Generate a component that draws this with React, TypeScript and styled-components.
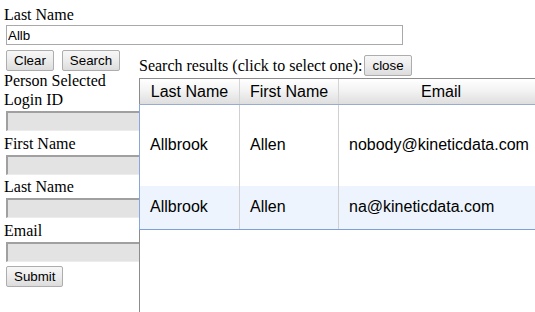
import styled, { createGlobalStyle } from 'styled-components'

const GlobalStyle = createGlobalStyle`
  html, body {
    margin: 0;
    padding: 0;
    background: #fff;
    overflow: hidden;
  }
  body {
    font-family: "Liberation Serif", "Times New Roman", serif;
    font-size: 16px;
    color: #000;
  }
`

const Page = styled.div`
  position: relative;
  height: 312px;
  padding: 5px 0 0 4px;
  box-sizing: border-box;
  overflow: hidden;
`

const Label = styled.div`
  line-height: 19px;
  white-space: nowrap;
`

const TextInput = styled.input`
  display: block;
  box-sizing: border-box;
  width: 397px;
  height: 20px;
  margin: 1px 0 0 2px;
  padding: 0 1px;
  border: 1px solid #a9a9a9;
  font-family: Arial, "Liberation Sans", sans-serif;
  font-size: 13.33px;
  color: #000;
  outline: none;
`

const Button = styled.button`
  height: 21px;
  padding: 0 7px;
  border: 1px solid #adadad;
  border-radius: 2px;
  background: linear-gradient(to bottom, #f7f7f7 0%, #ececec 50%, #dcdcdc 100%);
  font-family: Arial, "Liberation Sans", sans-serif;
  font-size: 13.33px;
  color: #000;
  line-height: 19px;
  cursor: pointer;
`

const ButtonRow = styled.div`
  display: flex;
  gap: 8px;
  margin: 5px 0 0 2px;
`

const Field = styled.div`
  display: flex;
  flex-direction: column;
`

const LockedInput = styled.input`
  display: block;
  box-sizing: border-box;
  width: 200px;
  height: 20px;
  margin: 2px 0 2.5px 2px;
  border-top: 2px solid #a0a0a0;
  border-left: 2px solid #a0a0a0;
  border-right: 1px solid #ececec;
  border-bottom: 1px solid #ececec;
  background: #e3e3e3;
`

const SubmitRow = styled.div`
  margin: 2px 0 0 2px;
`

const Popup = styled.div`
  position: absolute;
  left: 139px;
  top: 55px;
  width: 420px;
`

const PopupHeader = styled.div`
  display: flex;
  align-items: center;
  gap: 2px;
  height: 21px;
  line-height: 19px;
  white-space: nowrap;
`

const GridBox = styled.div`
  margin-top: 2px;
  height: 233px;
  border-top: 1px solid #8c8c8c;
  border-left: 1px solid #8c8c8c;
  background: #fff;
`

const Table = styled.table`
  position: relative;
  margin-left: -1px;
  width: 404px;
  table-layout: fixed;
  border-collapse: collapse;
  font-family: Arial, "Liberation Sans", sans-serif;
  font-size: 16px;
  color: #000;
`

const HeadCell = styled.th`
  height: 25px;
  padding: 0;
  font-weight: normal;
  text-align: center;
  background: linear-gradient(to bottom, #ffffff 0%, #f3f3f3 45%, #dedede 100%);
  border-right: 1px solid #d4d4d4;
  border-bottom: 1px solid #97acd0;
  &:first-child {
    border-left: 1px solid #8c8c8c;
  }
`

const Row = styled.tr<{ $alt?: boolean; $height: number }>`
  height: ${(p) => p.$height}px;
  background: ${(p) => (p.$alt ? '#edf4fd' : '#fff')};
  &:last-child td {
    border-bottom: 1px solid #7f9fd8;
  }
`

const Cell = styled.td`
  padding: 0 10px;
  vertical-align: middle;
  white-space: nowrap;
  overflow: hidden;
  border-right: 1px solid #d0d0d0;
  &:first-child {
    border-left: 1px solid #88a6dc;
  }
`

const fields = ['Login ID', 'First Name', 'Last Name', 'Email']

const results = [
  { last: 'Allbrook', first: 'Allen', email: 'nobody@kineticdata.com', height: 81 },
  { last: 'Allbrook', first: 'Allen', email: 'na@kineticdata.com', height: 44 },
]

export default function App() {
  return (
    <Page>
      <GlobalStyle />
      <Label>Last Name</Label>
      <TextInput defaultValue="Allb" />
      <ButtonRow>
        <Button>Clear</Button>
        <Button>Search</Button>
      </ButtonRow>
      <Label>Person Selected</Label>
      {fields.map((f) => (
        <Field key={f}>
          <Label>{f}</Label>
          <LockedInput disabled />
        </Field>
      ))}
      <SubmitRow>
        <Button>Submit</Button>
      </SubmitRow>

      <Popup>
        <PopupHeader>
          <span>Search results (click to select one):</span>
          <Button>close</Button>
        </PopupHeader>
        <GridBox>
          <Table>
            <colgroup>
              <col style={{ width: 100 }} />
              <col style={{ width: 99 }} />
              <col style={{ width: 205 }} />
            </colgroup>
            <thead>
              <tr>
                <HeadCell>Last Name</HeadCell>
                <HeadCell>First Name</HeadCell>
                <HeadCell>Email</HeadCell>
              </tr>
            </thead>
            <tbody>
              {results.map((r, i) => (
                <Row key={i} $alt={i % 2 === 1} $height={r.height}>
                  <Cell>{r.last}</Cell>
                  <Cell>{r.first}</Cell>
                  <Cell>{r.email}</Cell>
                </Row>
              ))}
            </tbody>
          </Table>
        </GridBox>
      </Popup>
    </Page>
  )
}
